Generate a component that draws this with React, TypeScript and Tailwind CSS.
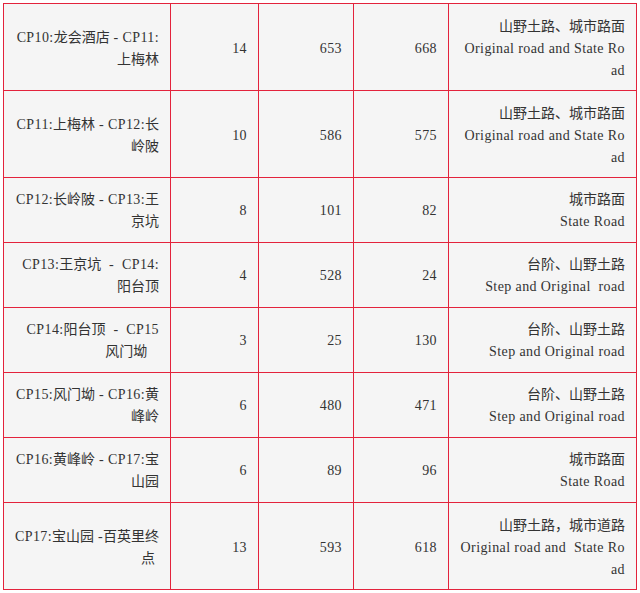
import React from "react";

type Row = { name: string[]; a: string; b: string; c: string; road: string[] };

const rows: Row[] = [
  { name: ["CP10:龙会酒店 - CP11:", "上梅林"], a: "14", b: "653", c: "668", road: ["山野土路、城市路面", "Original road and State Ro", "ad"] },
  { name: ["CP11:上梅林 - CP12:长", "岭陂"], a: "10", b: "586", c: "575", road: ["山野土路、城市路面", "Original road and State Ro", "ad"] },
  { name: ["CP12:长岭陂 - CP13:王", "京坑"], a: "8", b: "101", c: "82", road: ["城市路面", "State Road"] },
  { name: ["CP13:王京坑  -  CP14:", "阳台顶"], a: "4", b: "528", c: "24", road: ["台阶、山野土路", "Step and Original  road"] },
  { name: ["CP14:阳台顶  -  CP15", "风门坳\u00a0\u00a0\u00a0"], a: "3", b: "25", c: "130", road: ["台阶、山野土路", "Step and Original road"] },
  { name: ["CP15:风门坳 - CP16:黄", "峰岭"], a: "6", b: "480", c: "471", road: ["台阶、山野土路", "Step and Original road"] },
  { name: ["CP16:黄峰岭 - CP17:宝", "山园"], a: "6", b: "89", c: "96", road: ["城市路面", "State Road"] },
  { name: ["CP17:宝山园 -百英里终", "点 "], a: "13", b: "593", c: "618", road: ["山野土路，城市道路", "Original road and  State Ro", "ad"] },
];

function Txt({ s }: { s: string }) {
  const parts = s.match(/[\u3000-\u9fff\uff00-\uffef]+|[^\u3000-\u9fff\uff00-\uffef]+/g) || [];
  return (
    <>
      {parts.map((p, i) =>
        /[\u3000-\u9fff\uff00-\uffef]/.test(p) ? (
          <span key={i}>{p}</span>
        ) : (
          <span key={i} className="tracking-[0.4px]">
            {p}
          </span>
        )
      )}
    </>
  );
}

function Cell({ children, w, tall }: { children: React.ReactNode; w: string; tall: boolean }) {
  return (
    <td
      className={`border border-[#e3233c] bg-[#f5f5f5] text-right align-middle pl-[6px] pr-[11px] ${
        tall ? "pt-[12px] pb-[8px]" : "pt-[11px] pb-[9px]"
      } ${w}`}
    >
      {children}
    </td>
  );
}

function Lines({ lines }: { lines: string[] }) {
  return (
    <>
      {lines.map((l, i) => (
        <div key={i} className="whitespace-pre">
          <Txt s={l} />
        </div>
      ))}
    </>
  );
}

export default function App() {
  return (
    <div className="w-[640px] h-[593px] bg-white overflow-hidden pt-[3px] pl-[3px]">
      <table
        className="border-collapse table-fixed w-[633px] text-[14px] leading-[22px] text-[#333333]"
        style={{ fontFamily: '"Liberation Serif", "Noto Sans CJK SC", serif' }}
      >
        <colgroup>
          <col className="w-[167px]" />
          <col className="w-[88px]" />
          <col className="w-[95px]" />
          <col className="w-[95px]" />
          <col className="w-[188px]" />
        </colgroup>
        <tbody>
          {rows.map((r, i) => {
            const tall = r.road.length > 2;
            return (
              <tr key={i}>
                <Cell w="w-[167px]" tall={tall}>
                  <Lines lines={r.name} />
                </Cell>
                <Cell w="w-[88px]" tall={tall}>
                  <Txt s={r.a} />
                </Cell>
                <Cell w="w-[95px]" tall={tall}>
                  <Txt s={r.b} />
                </Cell>
                <Cell w="w-[95px]" tall={tall}>
                  <Txt s={r.c} />
                </Cell>
                <Cell w="w-[188px]" tall={tall}>
                  <Lines lines={r.road} />
                </Cell>
              </tr>
            );
          })}
        </tbody>
      </table>
    </div>
  );
}
